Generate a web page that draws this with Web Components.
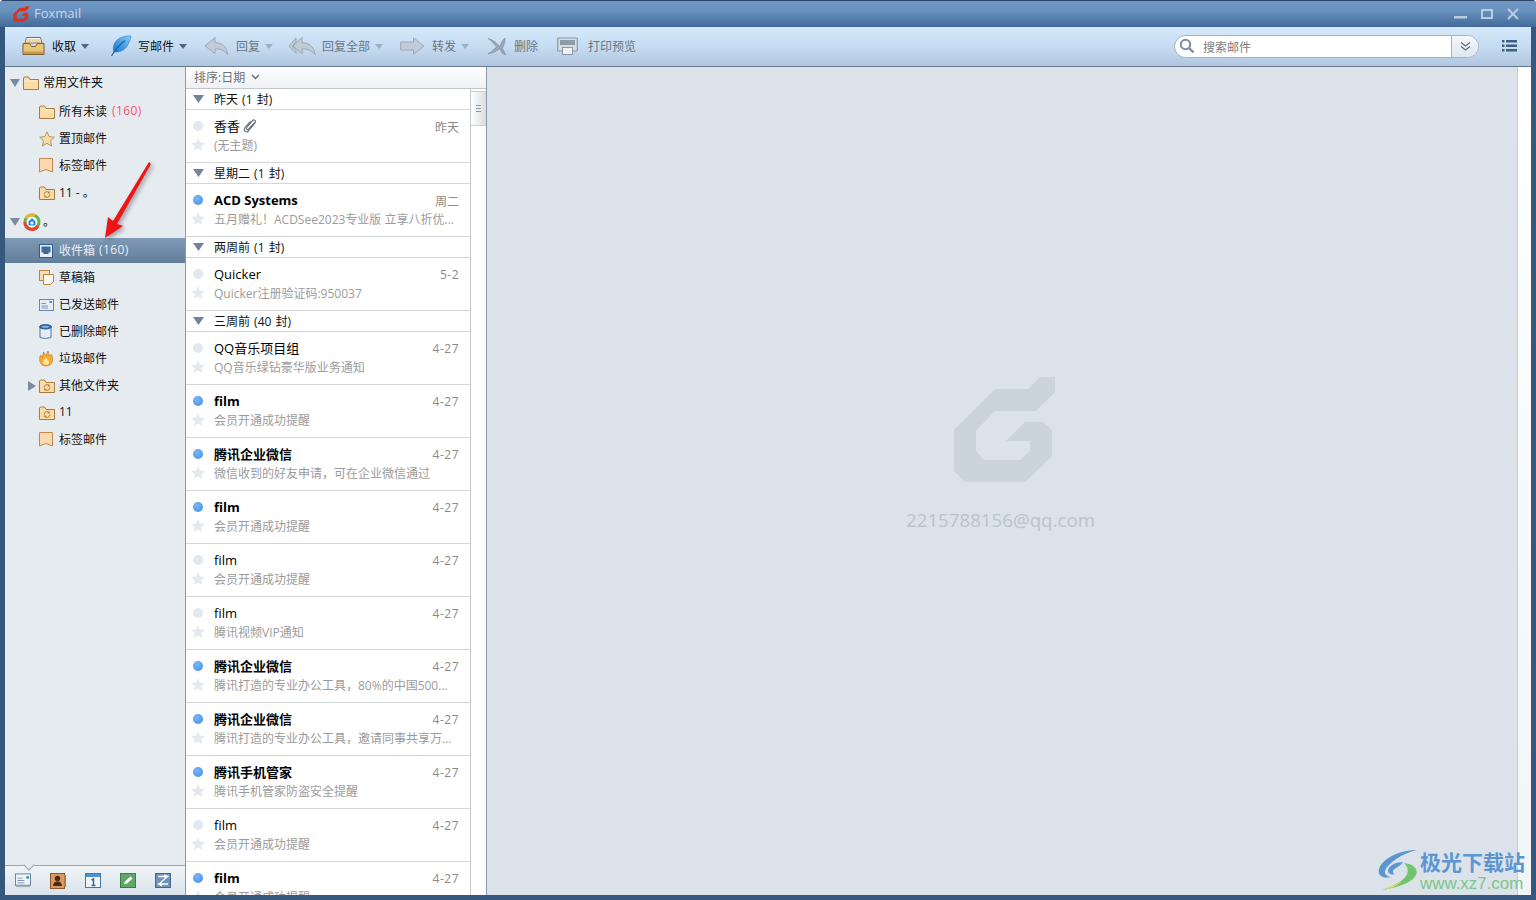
<!DOCTYPE html>
<html lang="zh">
<head>
<meta charset="utf-8">
<title>Foxmail</title>
<style>
html, body { margin: 0; height: 100%; overflow: hidden; background: #fff; }
body { font: 12px "Open Sans", "Noto Sans CJK SC", sans-serif; color: #111; }
</style>
</head>
<body>
<fm-window>
  <fm-titlebar slot="title"></fm-titlebar>
  <fm-toolbar slot="toolbar">
    <fm-tool icon="inbox" label="收取" caret style="--w:30px"></fm-tool>
    <fm-tool icon="feather" label="写邮件" caret style="--left:21px;--w:28px"></fm-tool>
    <fm-tool icon="reply" label="回复" caret muted style="--left:17px;--w:32px"></fm-tool>
    <fm-tool icon="replyall" label="回复全部" caret muted style="--left:15px;--w:34px"></fm-tool>
    <fm-tool icon="forward" label="转发" caret muted style="--left:17px;--w:32px"></fm-tool>
    <fm-tool icon="delete" label="删除" muted style="--left:18px;--w:27px"></fm-tool>
    <fm-tool icon="print" label="打印预览" muted style="--left:19px;--w:31px"></fm-tool>
    <fm-search></fm-search>
  </fm-toolbar>
  <fm-sidebar slot="side">
    <fm-folder head arrow="down" icon="folder" label="常用文件夹"></fm-folder>
    <fm-folder icon="folder" label="所有未读" count="(160)" alert></fm-folder>
    <fm-folder icon="star" label="置顶邮件"></fm-folder>
    <fm-folder icon="bookmark" label="标签邮件"></fm-folder>
    <fm-folder icon="sync" label="11 - 。"></fm-folder>
    <fm-folder head arrow="down" icon="qq" label="。"></fm-folder>
    <fm-folder icon="inboxbox" label="收件箱" count="(160)" selected></fm-folder>
    <fm-folder icon="draft" label="草稿箱"></fm-folder>
    <fm-folder icon="sent" label="已发送邮件"></fm-folder>
    <fm-folder icon="trash" label="已删除邮件"></fm-folder>
    <fm-folder icon="flame" label="垃圾邮件"></fm-folder>
    <fm-folder icon="sync" label="其他文件夹" arrow="right"></fm-folder>
    <fm-folder icon="sync" label="11"></fm-folder>
    <fm-folder icon="bookmark" label="标签邮件"></fm-folder>
    <fm-dock slot="dock"></fm-dock>
  </fm-sidebar>
  <fm-list slot="list">
    <fm-group label="昨天 (1 封)"></fm-group>
    <fm-mail from="香香" date="昨天" subject="(无主题)" attach></fm-mail>
    <fm-group label="星期二 (1 封)"></fm-group>
    <fm-mail from="ACD Systems" date="周二" subject="五月赠礼！ACDSee2023专业版 立享八折优..." unread></fm-mail>
    <fm-group label="两周前 (1 封)"></fm-group>
    <fm-mail from="Quicker" date="5-2" subject="Quicker注册验证码:950037"></fm-mail>
    <fm-group label="三周前 (40 封)"></fm-group>
    <fm-mail from="QQ音乐项目组" date="4-27" subject="QQ音乐绿钻豪华版业务通知"></fm-mail>
    <fm-mail from="film" date="4-27" subject="会员开通成功提醒" unread></fm-mail>
    <fm-mail from="腾讯企业微信" date="4-27" subject="微信收到的好友申请，可在企业微信通过" unread></fm-mail>
    <fm-mail from="film" date="4-27" subject="会员开通成功提醒" unread></fm-mail>
    <fm-mail from="film" date="4-27" subject="会员开通成功提醒"></fm-mail>
    <fm-mail from="film" date="4-27" subject="腾讯视频VIP通知"></fm-mail>
    <fm-mail from="腾讯企业微信" date="4-27" subject="腾讯打造的专业办公工具，80%的中国500..." unread></fm-mail>
    <fm-mail from="腾讯企业微信" date="4-27" subject="腾讯打造的专业办公工具，邀请同事共享万..." unread></fm-mail>
    <fm-mail from="腾讯手机管家" date="4-27" subject="腾讯手机管家防盗安全提醒" unread></fm-mail>
    <fm-mail from="film" date="4-27" subject="会员开通成功提醒"></fm-mail>
    <fm-mail from="film" date="4-27" subject="会员开通成功提醒" unread></fm-mail>
  </fm-list>
  <fm-preview slot="preview" account="2215788156@qq.com"></fm-preview>
  <fm-overlay slot="overlay"></fm-overlay>
</fm-window>

<script>
const G_PATH = 'M160 17H175V32.300L155.700 51H115L96 70.700V90.700L104 100H140.700L150 90.700V81H126L145 62H163.300L172 70V96L145.300 121.700H85L74 111V70L115 29H148.300Z';

// icons used all over the window
const ICONS = {
  folder: `<svg width="16" height="14" viewBox="0 0 16 14"><path d="M.5 2V13.500H15.500V3.500H7L5.500 1H1.500Z" fill="#fbdca6" stroke="#a87a3c"/><path d="M1.500 5H14.500" stroke="#fff1d6"/></svg>`,
  star: `<svg width="16" height="16" viewBox="0 0 16 16"><path d="M8 .8 10.200 5.600 15.300 6.200 11.500 9.700 12.600 15 8 12.300 3.400 15 4.500 9.700.7 6.200 5.800 5.600Z" fill="#f6dca8" stroke="#b29563"/></svg>`,
  bookmark: `<svg width="14" height="15" viewBox="0 0 14 15"><path d="M.5.5H13.500V14L7 11.500.5 14Z" fill="#f9d9ad" stroke="#c5874d"/></svg>`,
  sync: `<svg width="16" height="14" viewBox="0 0 16 14"><path d="M.5 2V13.500H15.500V3.500H7L5.500 1H1.500Z" fill="#fbdca6" stroke="#a87a3c"/><path d="M5 8.500A3 3 0 0 1 10.500 7M11 8.500A3 3 0 0 1 5.500 10" fill="none" stroke="#b07c3a"/><path d="M10 5 11 7.500 8.600 7.200ZM6 12 5 9.500 7.400 9.800Z" fill="#b07c3a"/></svg>`,
  qq: `<svg width="18" height="18" viewBox="0 0 18 18"><circle cx="9" cy="9" r="7" fill="#fff" stroke="#5bb548" stroke-width="3"/><path d="M2 9A7 7 0 0 0 15 13" fill="none" stroke="#e8432e" stroke-width="3"/><path d="M3 5A7 7 0 0 1 12 2.700" fill="none" stroke="#f1b32c" stroke-width="3"/><path d="M9 5 12.500 8.500V12.500H5.500V8.500Z" fill="#1f8fe0"/><circle cx="9" cy="10" r="1.600" fill="#fff"/></svg>`,
  inboxbox: `<svg width="14" height="14" viewBox="0 0 14 14"><rect x=".5" y=".5" width="13" height="13" fill="#e9eef4" stroke="#2f5c8f"/><path d="M2.500 2.500H11.500V8.500H9.500V10H4.500V8.500H2.500Z" fill="#3d6c9f"/></svg>`,
  draft: `<svg width="15" height="15" viewBox="0 0 15 15"><rect x=".5" y=".5" width="10" height="10" fill="#f7dcb5" stroke="#b78648"/><path d="M4.500 4.500H14.500V11.500L11.500 14.500H4.500Z" fill="#fbf6ea" stroke="#b78648"/></svg>`,
  sent: `<svg width="15" height="12" viewBox="0 0 15 12"><rect x=".5" y=".5" width="14" height="11" fill="#e6edf5" stroke="#6b87a8"/><path d="M2.500 4.500H7M2.500 7H9M2.500 9H9" stroke="#7b96b5"/><rect x="10.500" y="2" width="2.500" height="2" fill="#5d8bb7"/></svg>`,
  trash: `<svg width="13" height="15" viewBox="0 0 13 15"><path d="M1 3V13.500Q6.500 15.500 12 13.500V3Z" fill="#e7edf4" stroke="#4d76a6"/><ellipse cx="6.500" cy="2.800" rx="6" ry="2.200" fill="#2d6bb0" stroke="#2a5a92"/><ellipse cx="6.500" cy="2.800" rx="3.600" ry="1" fill="#8fb7de"/></svg>`,
  flame: `<svg width="14" height="16" viewBox="0 0 14 16"><path d="M1.500 4 3.500 6.500 4.500 1 7 5 9 0 10 5 12.500 3.500C14.500 8 14 15 7 15 1 15-.5 9 1.500 4Z" fill="#f7ad2e" stroke="#c47a1d" stroke-width=".7"/><path d="M4 11.500C4 9 6 8.500 7 6.500 8 8.500 10.500 9.500 10 12 9.500 14.500 4.500 14.500 4 11.500Z" fill="#ffe6a3"/></svg>`,
  inbox: `<svg width="23" height="20" viewBox="0 0 23 20"><path d="M4.500 1.500H18.500L20 7H3Z" fill="#fff7e3" stroke="#8d6c35"/><path d="M5 4H18M4.500 6H18.500" stroke="#c9b58b"/><path d="M1 7.500H7.500L9.500 10.500H13.500L15.500 7.500H22V18.500H1Z" fill="#e9c578" stroke="#7f5e2a"/><path d="M2 15.500H21V18H2Z" fill="#c79b4e"/></svg>`,
  feather: `<svg width="22" height="22" viewBox="0 0 22 22"><defs><linearGradient id="fe" x1="1" y1="0" x2="0" y2="1"><stop offset="0" stop-color="#8fd0f7"/><stop offset=".55" stop-color="#3f9de8"/><stop offset="1" stop-color="#1f74c4"/></linearGradient></defs><path d="M21 1C14 .5 6.500 3 4 9.500 3 12.500 3 15 4 17 10 17.500 15.500 15 18 9.500 19.500 6.500 20.500 4 21 1Z" fill="url(#fe)" stroke="#2b79bd" stroke-width=".6"/><path d="M1.500 21C5 15 9 10 15 5.500" fill="none" stroke="#195f9c" stroke-width="1.100"/></svg>`,
  reply: `<svg width="25" height="20" viewBox="0 0 25 20"><path d="M11 1.500 1 10 11 17.500V13C16 12.500 20 14 23.500 18.500 23 10.500 18 7 11 6.500Z" fill="#c2ccd6" stroke="#9ba7b2"/></svg>`,
  replyall: `<svg width="28" height="20" viewBox="0 0 28 20"><path d="M8 2 1 10 8 17.500V14.500L4.500 10 8 5.500Z" fill="#c2ccd6" stroke="#9ba7b2"/><path d="M14 1.500 5 10 14 17.500V13C19 12.500 23 14 27 18.500 26 10.500 21 7 14 6.500Z" fill="#c2ccd6" stroke="#9ba7b2"/></svg>`,
  forward: `<svg width="25" height="18" viewBox="0 0 25 18"><path d="M.7 5H13.500V.8L24 9 13.500 17.200V13H.7Z" fill="#c2ccd6" stroke="#9ba7b2"/></svg>`,
  delete: `<svg width="20" height="19" viewBox="0 0 20 19"><path d="M1 1.500C6 2.500 10 6 12.500 9.500 14 7 15 3 18 1 18.500 4 17 8 15.500 11.500L19 18 15.500 16.500 12.500 12C9 14.500 5 16.500 1 17 4 15 7 12.500 9.500 10 7 6.500 4 3.500 1 1.500Z" fill="#9aa6b1" stroke="#7d8994" stroke-width=".5"/></svg>`,
  print: `<svg width="21" height="18" viewBox="0 0 21 18"><rect x=".7" y="1" width="19.600" height="13" rx="1" fill="#d5dce4" stroke="#8d98a3" stroke-width="1.200"/><rect x="3" y="3" width="15" height="5" fill="#8e9ca9"/><rect x="5.500" y="10.500" width="10" height="7" fill="#eef1f4" stroke="#8d98a3"/></svg>`,
  mail: `<svg width="17" height="15" viewBox="0 0 17 15"><rect x=".5" y=".5" width="16" height="12" fill="#f0f4f8" stroke="#5e7fa5"/><path d="M2.500 5H8M2.500 7.500H10M2.500 10H10" stroke="#7b96b5"/><rect x="12" y="3" width="3" height="2.500" fill="#2f9a8c"/><path d="M1 14H16" stroke="#9aa8b6"/></svg>`,
  contacts: `<svg width="16" height="16" viewBox="0 0 16 16"><rect x=".5" y=".5" width="14" height="15" fill="#d99a63" stroke="#8a5a2b"/><path d="M15 2V14" stroke="#b67a3f" stroke-width="2"/><circle cx="7.500" cy="5.500" r="2.700" fill="#4b2a12"/><path d="M3 13C3.500 9.500 5 8.500 7.500 8.500S11.500 9.500 12 13Z" fill="#4b2a12"/></svg>`,
  calendar: `<svg width="16" height="15" viewBox="0 0 16 15"><rect x=".5" y=".5" width="15" height="14" fill="#f4f7fa" stroke="#3f78ad"/><rect x="1" y="1" width="14" height="3" fill="#4f93d0"/><path d="M6.500 7 8.500 6V12.500M6.500 12.500H10.500" fill="none" stroke="#2c6aa0" stroke-width="1.500"/></svg>`,
  note: `<svg width="16" height="15" viewBox="0 0 16 15"><rect x=".5" y=".5" width="15" height="14" fill="#63a768" stroke="#3f7d45"/><path d="M4 11 5 8.500 10.500 3.500 12.500 5.500 7 10.500Z" fill="#fff"/></svg>`,
  rss: `<svg width="16" height="15" viewBox="0 0 16 15"><rect x=".5" y=".5" width="15" height="14" fill="#6f93bd" stroke="#43688f"/><path d="M3 3.500H12.500L4 11H13M9 1.800 12.800 3.500 9.500 5.500M7 9 3.500 11 7 13" fill="none" stroke="#fff" stroke-width="1.300"/></svg>`,
  clip: `<svg width="14" height="15" viewBox="0 0 14 15"><path d="M11.500 4.500 5.500 11C4 12.500 2.500 11 3.800 9.500L9.500 2.600C11 1 13.500 2.800 12 4.800L5.500 13C3.200 15.300 0 12.800 1.800 9.800L7.500 3.300" fill="none" stroke="#666f78" stroke-width="1.100"/></svg>`,
  starflat: `<svg width="14" height="13" viewBox="0 0 14 13"><path d="M7 0 9 4.500 14 5 10.200 8.200 11.400 13 7 10.400 2.600 13 3.800 8.200 0 5 5 4.500Z" fill="#e4e9f0"/></svg>`
};

class FmWindow extends HTMLElement {
  constructor() {
    super();
    this.attachShadow({ mode: 'open' });
    this.shadowRoot.innerHTML = `
      <style>
        :host { display: flex; flex-direction: column; position: relative; width: 1536px; height: 900px; box-sizing: border-box;
          background: #36587f; border-radius: 4px 4px 0 0; overflow: hidden; }
        .body { flex: 1; min-height: 0; display: flex; margin: 0 5px 5px 5px; }
        .strip { width: 14px; background: linear-gradient(#fff, #f2f4f6); border-left: 1px solid #c8ccd0; box-sizing: border-box; }
      </style>
      <slot name="title"></slot>
      <div style="margin:0 5px"><slot name="toolbar"></slot></div>
      <div class="body">
        <slot name="side"></slot>
        <slot name="list"></slot>
        <slot name="preview"></slot>
        <div class="strip"></div>
      </div>
      <slot name="overlay"></slot>`;
  }
}

class FmTitlebar extends HTMLElement {
  constructor() {
    super();
    this.attachShadow({ mode: 'open' });
    this.shadowRoot.innerHTML = `
      <style>
        :host { display: flex; align-items: center; height: 27px; box-sizing: border-box; border-top: 1px solid #2b4463;
          background: linear-gradient(#6e98c3, #6a94bf 35%, #41699a); color: #c6d8ea; font-size: 13px; padding-left: 13px; }
        svg { flex: none; }
        .name { margin-left: 5px; padding-bottom: 2px; }
        .ctl { margin-left: auto; display: flex; align-items: center; gap: 14px; padding-right: 17px; padding-bottom: 1px; }
      </style>
      <svg width="16" height="16" viewBox="74 17 101 105"><path d="${G_PATH}" fill="#d9331f"/></svg>
      <span class="name">Foxmail</span>
      <div class="ctl">
        <svg width="13" height="12" viewBox="0 0 13 12"><rect y="8" width="13" height="2.500" fill="#b9cde0"/></svg>
        <svg width="12" height="12" viewBox="0 0 12 12"><rect x="1" y="2" width="10" height="8" fill="none" stroke="#b9cde0" stroke-width="2"/></svg>
        <svg width="12" height="12" viewBox="0 0 12 12"><path d="M1 1 11 11M11 1 1 11" stroke="#b9cde0" stroke-width="2"/></svg>
      </div>`;
  }
}

class FmToolbar extends HTMLElement {
  constructor() {
    super();
    this.attachShadow({ mode: 'open' });
    this.shadowRoot.innerHTML = `
      <style>
        :host { display: flex; align-items: center; height: 40px; box-sizing: border-box; padding: 0 0 1px 17px;
          background: linear-gradient(#d6e9fb, #c6dcf2 50%, #afc6df); border-bottom: 1px solid #66798d; }
      </style>
      <slot></slot>`;
  }
}

class FmTool extends HTMLElement {
  constructor() {
    super();
    this.attachShadow({ mode: 'open' });
  }
  connectedCallback() {
    const muted = this.hasAttribute('muted');
    this.shadowRoot.innerHTML = `
      <style>
        :host { display: flex; align-items: center; margin-left: var(--left, 0); color: ${muted ? '#6d7680' : '#111'}; }
        .ic { width: var(--w); display: flex; align-items: center; flex: none; }
        .caret { width: 0; height: 0; margin-left: 5px; border: 4px solid transparent; border-top: 5px solid ${muted ? '#9fb0c2' : '#52667c'}; border-bottom: 0; }
      </style>
      <span class="ic">${ICONS[this.getAttribute('icon')]}</span>
      <span>${this.getAttribute('label')}</span>
      ${this.hasAttribute('caret') ? '<span class="caret"></span>' : ''}`;
  }
}

class FmSearch extends HTMLElement {
  constructor() {
    super();
    this.attachShadow({ mode: 'open' });
    this.shadowRoot.innerHTML = `
      <style>
        :host { display: flex; align-items: center; margin-left: auto; margin-right: 14px; color: #7d7d7d; }
        .box { width: 305px; height: 23px; box-sizing: border-box; display: flex; align-items: center; background: #fff;
          border: 1px solid #a3b3c4; border-radius: 12px; overflow: hidden; }
        .glass { margin: 0 8px 0 4px; flex: none; }
        .txt { flex: 1; padding-top: 2px; }
        .more { width: 26px; height: 100%; flex: none; display: flex; align-items: center; justify-content: center;
          border-left: 1px solid #a3b3c4; background: linear-gradient(#f5f8fb, #dfe7ef); }
        .menu { margin-left: 23px; }
      </style>
      <div class="box">
        <svg class="glass" width="16" height="16" viewBox="0 0 16 16"><circle cx="6.500" cy="6.500" r="4.700" fill="none" stroke="#7b8d9e" stroke-width="2"/><path d="M10 10 14.500 14.500" stroke="#7b8d9e" stroke-width="2.400"/></svg>
        <span class="txt">搜索邮件</span>
        <div class="more"><svg width="11" height="11" viewBox="0 0 11 11"><path d="M1 1.500 5.500 5 10 1.500M1 5.500 5.500 9 10 5.500" fill="none" stroke="#5f7182" stroke-width="1.300"/></svg></div>
      </div>
      <svg class="menu" width="15" height="12" viewBox="0 0 15 12"><path d="M0 0H2.500V2.500H0ZM4 0H15V2.500H4ZM0 4.500H2.500V7H0ZM4 4.500H15V7H4ZM0 9H2.500V11.500H0ZM4 9H15V11.500H4Z" fill="#3f5f82"/></svg>`;
  }
}

class FmSidebar extends HTMLElement {
  constructor() {
    super();
    this.attachShadow({ mode: 'open' });
    this.shadowRoot.innerHTML = `
      <style>
        :host { display: flex; flex-direction: column; width: 181px; flex: none; box-sizing: border-box; background: #e6ebf0; border-right: 1px solid #8d99a5; }
        .tree { flex: 1; min-height: 0; }
      </style>
      <div class="tree"><slot></slot></div>
      <slot name="dock"></slot>`;
  }
}

class FmFolder extends HTMLElement {
  constructor() {
    super();
    this.attachShadow({ mode: 'open' });
  }
  connectedCallback() {
    const head = this.hasAttribute('head');
    const sel = this.hasAttribute('selected');
    const arrow = this.getAttribute('arrow');
    const count = this.getAttribute('count');
    let tri = '';
    if (arrow === 'down') tri = '<svg width="10" height="8" viewBox="0 0 10 8"><path d="M0 0H10L5 8Z" fill="#7a8c9f"/></svg>';
    if (arrow === 'right') tri = '<svg width="8" height="10" viewBox="0 0 8 10"><path d="M0 0 8 5 0 10Z" fill="#7a8c9f"/></svg>';
    this.shadowRoot.innerHTML = `
      <style>
        :host { display: block; height: ${head ? 31 : 27}px; box-sizing: border-box; padding-top: 1px; }
        .row { height: ${head ? 29 : 25}px; display: flex; align-items: center; box-sizing: border-box; position: relative;
          padding-left: ${head ? 18 : 34}px; }
        :host([selected]) .row { background: linear-gradient(#7f99b5, #617e9b); color: #e9eef3; }
        .tri { position: absolute; left: ${head ? 5 : 23}px; display: flex; }
        .ic { width: 20px; flex: none; display: flex; align-items: center; }
        .n, .c { margin-bottom: 2px; }
        .n { white-space: pre; }
        .c { margin-left: ${sel ? 4 : 5}px; letter-spacing: .4px; color: ${sel ? '#e9eef3' : '#f0556c'}; }
      </style>
      <div class="row">
        ${tri ? `<span class="tri">${tri}</span>` : ''}
        <span class="ic">${ICONS[this.getAttribute('icon')]}</span>
        <span class="n">${this.getAttribute('label')}</span>
        ${count ? `<span class="c">${count}</span>` : ''}
      </div>`;
  }
}

class FmDock extends HTMLElement {
  constructor() {
    super();
    this.attachShadow({ mode: 'open' });
    this.shadowRoot.innerHTML = `
      <style>
        :host { display: flex; align-items: center; height: 30px; box-sizing: border-box; position: relative; padding-left: 10px; gap: 19px;
          border-top: 1px solid #9ba6b1; background: linear-gradient(#f0f4f7, #d9e3eb); }
        :host::before { content: ""; position: absolute; left: 20px; top: -5px; width: 7px; height: 7px; background: #e6ebf0;
          border-right: 1px solid #9ba6b1; border-bottom: 1px solid #9ba6b1; transform: rotate(45deg); }
        span { display: flex; width: 16px; justify-content: center; }
        span:first-child { width: 17px; }
      </style>
      <span>${ICONS.mail}</span><span>${ICONS.contacts}</span><span>${ICONS.calendar}</span><span>${ICONS.note}</span><span>${ICONS.rss}</span>`;
  }
}

class FmList extends HTMLElement {
  constructor() {
    super();
    this.attachShadow({ mode: 'open' });
    this.shadowRoot.innerHTML = `
      <style>
        :host { display: flex; flex-direction: column; width: 301px; flex: none; box-sizing: border-box; background: #fff; border-right: 1px solid #8d99a5; overflow: hidden; }
        .sort { height: 22px; flex: none; box-sizing: border-box; display: flex; align-items: center; padding: 0 0 2px 8px; color: #6b7178;
          background: linear-gradient(#fff, #eef1f5); border-bottom: 1px solid #c2c7cc; }
        .sort svg { margin-left: 6px; }
        .main { flex: 1; min-height: 0; display: flex; }
        .rows { width: 285px; flex: none; box-sizing: border-box; border-right: 1px solid #c6cacd; overflow: hidden; }
        .bar { flex: 1; padding-top: 2px; background: #fff; }
        .thumb { height: 35px; box-sizing: border-box; display: flex; flex-direction: column; justify-content: center; align-items: center; gap: 2px;
          border: 1px solid #c8ced4; border-width: 1px 0 1px 0; background: linear-gradient(90deg, #fff, #d8dde2); }
        .thumb i { width: 5px; height: 1px; background: #8d9bab; }
      </style>
      <div class="sort"><span>排序:日期</span><svg width="9" height="6" viewBox="0 0 9 6"><path d="M1 1 4.500 4.500 8 1" fill="none" stroke="#5b6670" stroke-width="1.300"/></svg></div>
      <div class="main">
        <div class="rows"><slot></slot></div>
        <div class="bar"><div class="thumb"><i></i><i></i><i></i></div></div>
      </div>`;
  }
}

class FmGroup extends HTMLElement {
  constructor() {
    super();
    this.attachShadow({ mode: 'open' });
  }
  connectedCallback() {
    this.shadowRoot.innerHTML = `
      <style>
        :host { display: flex; align-items: center; height: 21px; box-sizing: border-box; border-bottom: 1px solid #d3d6d9; padding-left: 7px; }
        svg { margin-right: 10px; flex: none; }
        span { word-spacing: 1px; }
      </style>
      <svg width="11" height="8" viewBox="0 0 11 8"><path d="M0 0H11L5.500 8Z" fill="#70849a"/></svg>
      <span>${this.getAttribute('label')}</span>`;
  }
}

class FmMail extends HTMLElement {
  constructor() {
    super();
    this.attachShadow({ mode: 'open' });
  }
  connectedCallback() {
    const unread = this.hasAttribute('unread');
    const date = this.getAttribute('date');
    this.shadowRoot.innerHTML = `
      <style>
        :host { display: block; height: 53px; box-sizing: border-box; border-bottom: 1px solid #d3d6d9; padding: 6px 11px 0 5px; }
        .line { display: flex; align-items: center; height: 19px; }
        .mark { width: 23px; flex: none; display: flex; justify-content: center; padding-right: 9px; box-sizing: border-box; }
        .dot { width: 10px; height: 10px; margin-top: 1px; border-radius: 50%; background: ${unread ? 'radial-gradient(circle at 40% 35%, #79b6f7, #3b8ee8)' : '#e2e8ef'}; }
        .from { font-size: 13px; color: #000; font-weight: ${unread ? 700 : 400}; white-space: nowrap; }
        .clip { display: flex; margin-left: 3px; }
        .date { margin-left: auto; margin-top: 2px; color: #8a8a8a; letter-spacing: ${/^\d/.test(date) ? '.5px' : '0'}; }
        .sub { color: #9b9b9b; white-space: nowrap; }
      </style>
      <div class="line">
        <span class="mark"><span class="dot"></span></span>
        <span class="from">${this.getAttribute('from')}</span>
        ${this.hasAttribute('attach') ? `<span class="clip">${ICONS.clip}</span>` : ''}
        <span class="date">${date}</span>
      </div>
      <div class="line">
        <span class="mark">${ICONS.starflat}</span>
        <span class="sub">${this.getAttribute('subject')}</span>
      </div>`;
  }
}

class FmPreview extends HTMLElement {
  constructor() {
    super();
    this.attachShadow({ mode: 'open' });
  }
  connectedCallback() {
    this.shadowRoot.innerHTML = `
      <style>
        :host { flex: 1; min-width: 0; display: flex; flex-direction: column; align-items: center; box-sizing: border-box; padding-top: 310px; background: #dbe2e9; }
        svg { margin-left: 5px; }
        .mail { margin: 24px 3px 0 0; font-size: 18.700px; line-height: 28px; color: #bac3cc; }
      </style>
      <svg width="101" height="105" viewBox="74 17 101 105"><path d="${G_PATH}" fill="#cbd3dc"/></svg>
      <div class="mail">${this.getAttribute('account')}</div>`;
  }
}

// red arrow and the site's watermark lie over the window
class FmOverlay extends HTMLElement {
  constructor() {
    super();
    this.attachShadow({ mode: 'open' });
    this.shadowRoot.innerHTML = `
      <style>
        :host { display: block; position: absolute; inset: 0; pointer-events: none; }
        .arrow { position: absolute; left: 100px; top: 158px; filter: drop-shadow(2px 2px 2px rgba(0,0,0,.35)); }
        .wm { position: absolute; left: 1377px; top: 849px; display: flex; }
        .t { display: flex; flex-direction: column; }
        .a { font: 700 21px/24px "Liberation Sans", "Noto Sans CJK SC", sans-serif; color: #5b96d3; margin-top: 2px; }
        .b { font: 16.900px/17px "Liberation Sans", sans-serif; color: #79c78a; }
      </style>
      <svg class="arrow" width="56" height="84" viewBox="100 158 56 84"><path d="M149 162 151 164 117 224 123 226 105 238 108 217 113 221Z" fill="#f01414"/></svg>
      <div class="wm">
        <svg width="43" height="42" viewBox="0 0 43 42">
          <path d="M40 1C25 1 6 8 2 20 0 27 7 30 14 28 7 27 6 22 11 17 17 10 28 4 40 1Z" fill="#5b96d3"/>
          <path d="M26 13C18 13 11 17 11 22 11 25 15 26 18 25 15 24 15 21 19 19 22 17.500 24 16 26 13Z" fill="#5b96d3"/>
          <path d="M27 14C38 15 44 22 36 30 29 36 17 39 5 41 15 37 25 33 29 27 32 22 31 18 27 14Z" fill="#73c46e"/>
          <path d="M5 41C13 38 21 35 26 31 22 36 14 40 5 41Z" fill="#e3df62"/>
        </svg>
        <div class="t"><span class="a">极光下载站</span><span class="b">www.xz7.com</span></div>
      </div>`;
  }
}

customElements.define('fm-window', FmWindow);
customElements.define('fm-titlebar', FmTitlebar);
customElements.define('fm-toolbar', FmToolbar);
customElements.define('fm-tool', FmTool);
customElements.define('fm-search', FmSearch);
customElements.define('fm-sidebar', FmSidebar);
customElements.define('fm-folder', FmFolder);
customElements.define('fm-dock', FmDock);
customElements.define('fm-list', FmList);
customElements.define('fm-group', FmGroup);
customElements.define('fm-mail', FmMail);
customElements.define('fm-preview', FmPreview);
customElements.define('fm-overlay', FmOverlay);
</script>
</body>
</html>
